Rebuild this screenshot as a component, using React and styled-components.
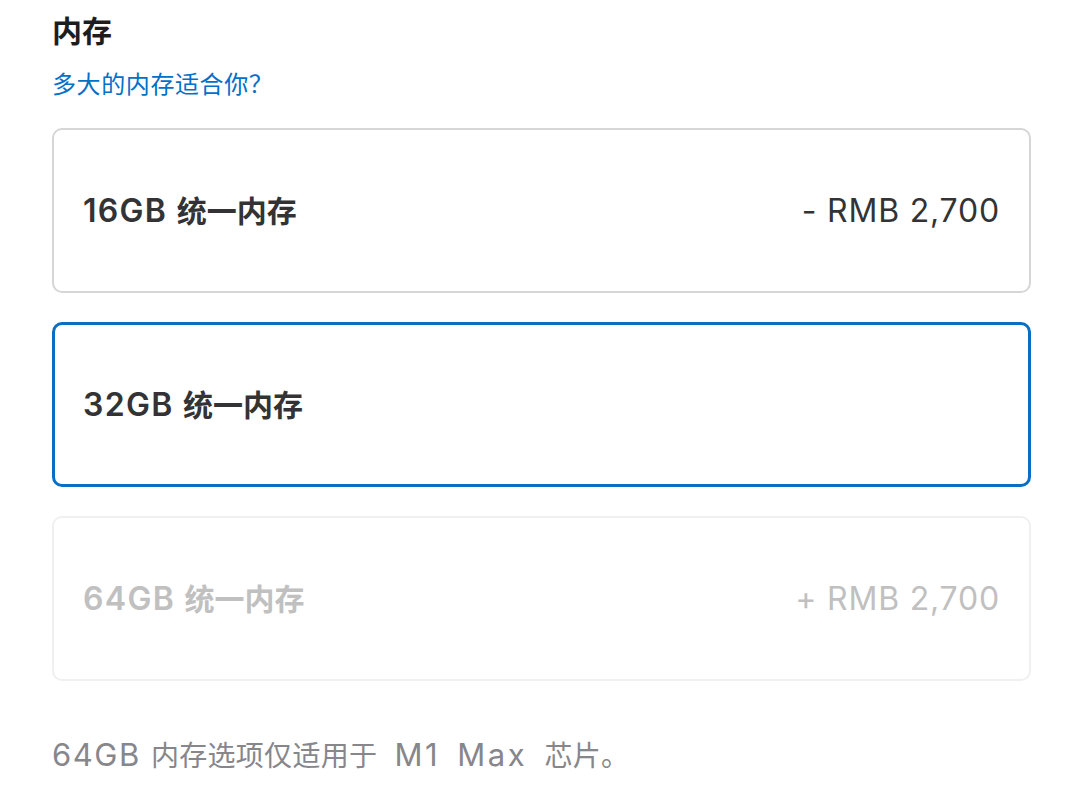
import React from "react";
import styled, { createGlobalStyle } from "styled-components";

const GlobalStyle = createGlobalStyle`
  html, body { margin: 0; padding: 0; background: #fff; }
  body {
    font-family: Inter, "Noto Sans CJK SC", "Noto Sans", sans-serif;
    -webkit-font-smoothing: antialiased;
  }
`;

const Page = styled.div`
  padding: 0 39px 0 52px;
  display: flex;
  flex-direction: column;
`;

const Title = styled.h2`
  margin: 13px 0 0;
  font-size: 30px;
  line-height: 36px;
  font-weight: 700;
  color: #1d1d1f;
`;

const HelpLink = styled.a`
  margin-top: 21px;
  font-size: 24px;
  line-height: 30px;
  letter-spacing: 0.6px;
  color: #0070c9;
  text-decoration: none;
  cursor: pointer;
`;

const OptionList = styled.div`
  margin-top: 28px;
  display: flex;
  flex-direction: column;
  gap: 29px;
`;

const Option = styled.div`
  box-sizing: border-box;
  height: 165px;
  padding: 0 ${(p) => (p.$selected ? 28 : 29)}px 0 ${(p) => (p.$selected ? 28 : 29)}px;
  display: flex;
  align-items: center;
  justify-content: space-between;
  border-radius: 10px;
  border: ${(p) =>
    p.$selected ? "3px solid #0a6fc4" : p.$disabled ? "2px solid #f0f0f0" : "2px solid #d6d6d6"};
  color: ${(p) => (p.$disabled ? "#c0c0c0" : "#333336")};
  cursor: ${(p) => (p.$disabled ? "default" : "pointer")};
`;

const OptionName = styled.span`
  font-size: 30px;
  line-height: 36px;
  font-weight: 600;
`;

const Latin = styled.span`
  letter-spacing: ${(p) => p.$track};
  word-spacing: ${(p) => p.$words || "normal"};
  font-size: ${(p) => p.$size || "inherit"};
`;

const OptionPrice = styled.span`
  font-size: 32px;
  line-height: 36px;
  font-weight: 400;
  letter-spacing: 0.8px;
`;

const Note = styled.p`
  margin: 56px 0 0;
  font-size: 28px;
  line-height: 36px;
  color: #86868b;
  letter-spacing: 0.3px;
`;

const options = [
  { size: "16GB", price: "- RMB 2,700" },
  { size: "32GB", price: "", selected: true },
  { size: "64GB", price: "+ RMB 2,700", disabled: true },
];

export default function App() {
  return (
    <>
      <GlobalStyle />
      <Page>
        <Title>内存</Title>
        <HelpLink>多大的内存适合你？</HelpLink>
        <OptionList>
          {options.map((o) => (
            <Option key={o.size} $selected={o.selected} $disabled={o.disabled}>
              <OptionName>
                <Latin $track="1.3px" $size="32px">{o.size} </Latin>统一内存
              </OptionName>
              {o.price && <OptionPrice>{o.price}</OptionPrice>}
            </Option>
          ))}
        </OptionList>
        <Note>
          <Latin $track="1.5px" $size="31px">64GB </Latin>内存选项仅适用于
          <Latin $track="2.5px" $words="6px" $size="31px"> M1 Max </Latin>芯片。
        </Note>
      </Page>
    </>
  );
}
